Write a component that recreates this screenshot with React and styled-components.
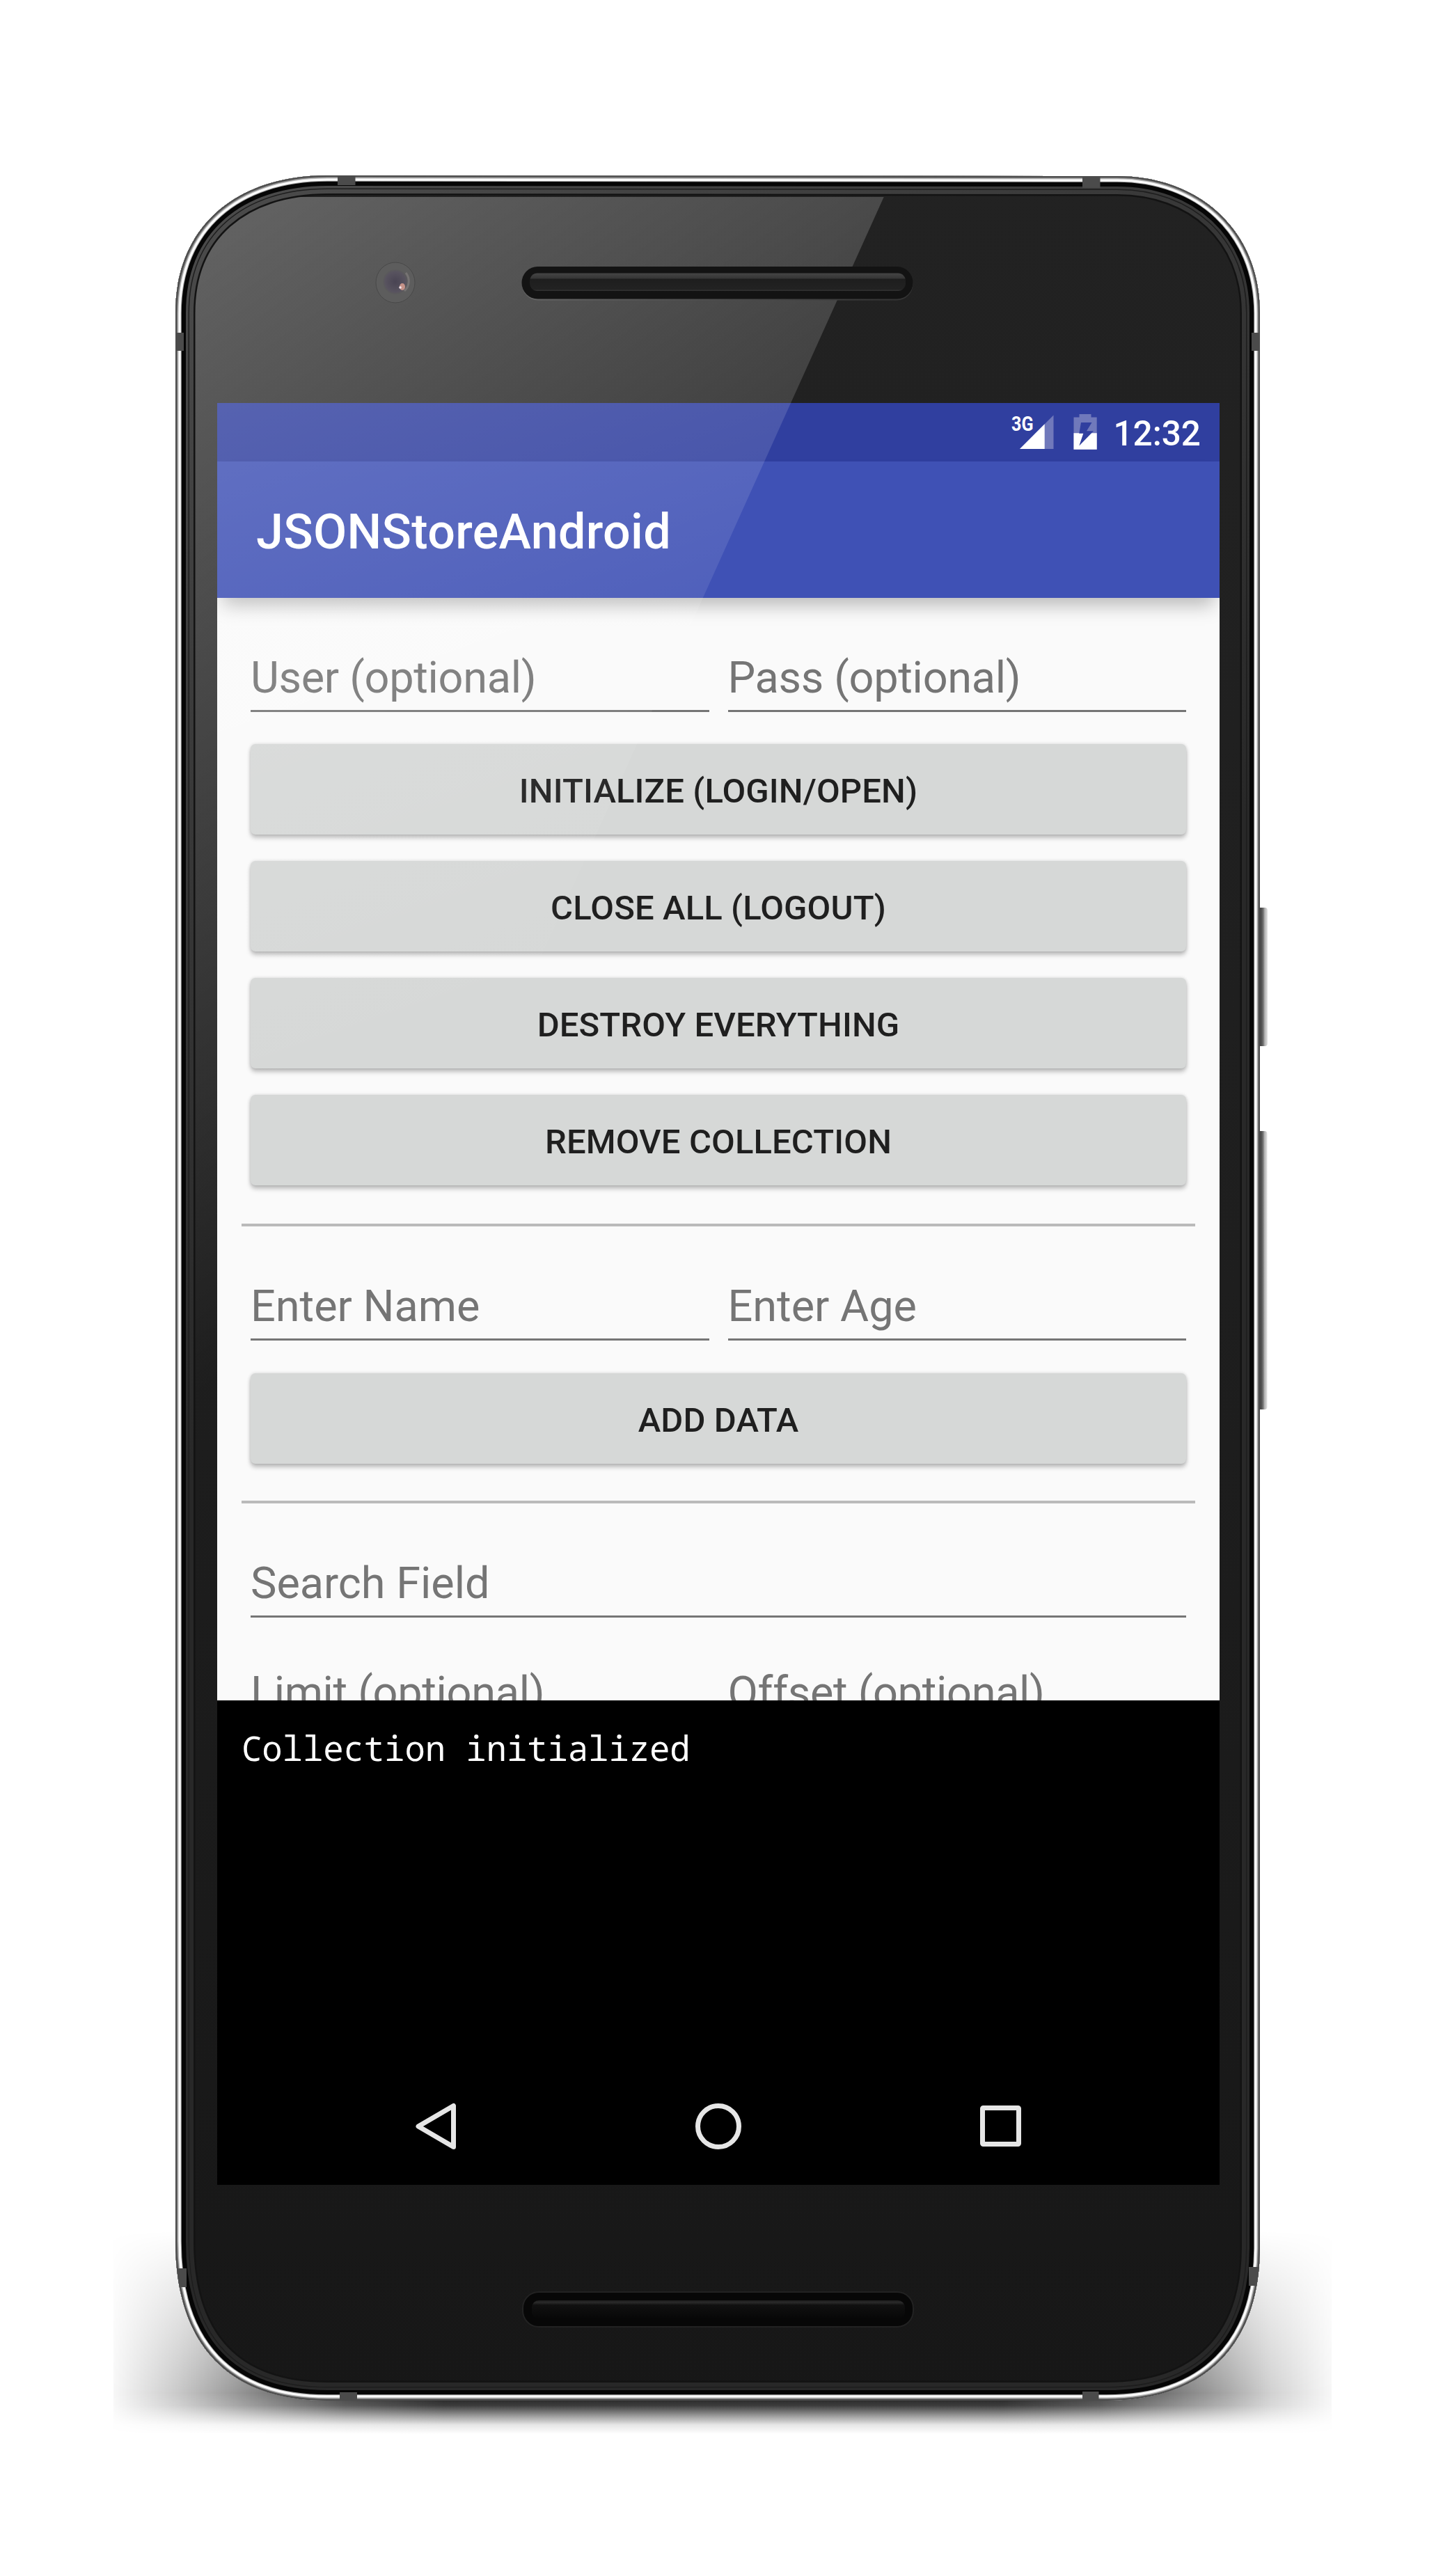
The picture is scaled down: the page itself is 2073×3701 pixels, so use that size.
import React from "react";
import styled, { createGlobalStyle } from "styled-components";

const Global = createGlobalStyle`
  html, body { margin: 0; padding: 0; background: #fff; }
  * { box-sizing: border-box; }
`;

const Page = styled.main`
  position: relative;
  width: 2073px;
  height: 3701px;
  padding: 579px 0 0 312px;
  background: #fff;
  overflow: hidden;
  font-family: Roboto, "Noto Sans", sans-serif;
`;

const PhoneArt = styled.svg`
  position: absolute;
  inset: 0;
  width: 2073px;
  height: 3701px;
`;

const Screen = styled.section`
  position: relative;
  display: flex;
  flex-direction: column;
  width: 1440px;
  height: 2560px;
  background: #000;
  overflow: hidden;
`;

const StatusBar = styled.div`
  display: flex;
  justify-content: flex-end;
  align-items: flex-start;
  flex: none;
  height: 84px;
  padding-right: 27px;
  background: #303f9f;
`;

const StatusIcons = styled.svg`
  width: 128px;
  height: 60px;
  margin: 12px 22px 0 0;
`;

const Clock = styled.span`
  margin-top: 15px;
  color: #fff;
  font-size: 49.5px;
  font-weight: 500;
  line-height: 58px;
`;

const Toolbar = styled.header`
  position: relative;
  z-index: 1;
  display: flex;
  align-items: center;
  flex: none;
  height: 196px;
  padding: 6px 0 0 56px;
  background: #3f51b5;
  box-shadow: 0 18px 26px -8px rgba(0, 0, 0, 0.27);
`;

const Title = styled.h1`
  margin: 0;
  color: #fff;
  font-size: 70px;
  font-weight: 500;
  letter-spacing: 0.35px;
  line-height: 82px;
`;

const Form = styled.div`
  display: flex;
  flex-direction: column;
  flex: none;
  height: 1584px;
  padding: 0 35px;
  background: #fafafa;
  overflow: hidden;
`;

const FieldRow = styled.div`
  display: flex;
  flex: none;
  gap: 27px;
  height: 129px;
  margin: ${(p) => p.$top ?? 35}px 13px 0;
`;

const Field = styled.div`
  display: flex;
  align-items: flex-end;
  flex: 1 1 0;
  padding-bottom: 9px;
  border-bottom: 3px solid #757575;
  color: #757575;
  font-size: 63px;
  letter-spacing: ${(p) => (p.$tight ? "-0.3px" : "0")};
  line-height: 74px;
  white-space: nowrap;
`;

const Buttons = styled.div`
  display: flex;
  flex-direction: column;
  flex: none;
  gap: 38px;
  margin: ${(p) => p.$top ?? 46}px 13px 0;
`;

const RaisedButton = styled.button`
  height: 130px;
  padding: 6px 0 0;
  border: 0;
  border-radius: 7px;
  background: #d6d8d7;
  box-shadow: 0 5px 6px rgba(0, 0, 0, 0.24), 0 0 5px rgba(0, 0, 0, 0.14);
  color: #1f1f1f;
  font: 500 49px/58px Roboto, "Noto Sans", sans-serif;
  letter-spacing: 0.12px;
  text-transform: uppercase;
`;

const Divider = styled.hr`
  flex: none;
  width: 100%;
  height: 4px;
  margin: ${(p) => p.$top ?? 55}px 0 0;
  border: 0;
  background: #bababa;
`;

const Log = styled.pre`
  flex: 1;
  margin: 0;
  padding: 39px 35px;
  color: #fff;
  font: 49px/58px "Droid Sans Mono", "Noto Sans Mono", "DejaVu Sans Mono", monospace;
  letter-spacing: -0.1px;
`;

const NavBar = styled.nav`
  display: flex;
  justify-content: center;
  align-items: center;
  flex: none;
  gap: 310px;
  height: 168px;
`;

const NavIcon = styled.svg`
  width: 96px;
  height: 96px;
  fill: none;
  stroke: #e6e6e6;
  stroke-width: 7;
  stroke-linejoin: round;
`;

const Glare = styled.svg`
  position: absolute;
  inset: 0;
  z-index: 2;
  pointer-events: none;
`;

const OUTLINE =
  "M470 252 L1605 253 C1722 253 1810 330 1810 450 L1810 3230 C1809 3370 1730 3449 1590 3449 L470 3449 C330 3449 252 3370 252 3220 L252 450 C252 325 340 252 470 252 Z";

const RINGS = [
  { width: 57, color: "#131313" },
  { width: 52, color: "url(#lip)" },
  { width: 40, color: "#1d1d1d" },
  { width: 37, color: "url(#lip)" },
  { width: 30, color: "#060606" },
  { width: 17.5, color: "#9d9d9d" },
  { width: 15.5, color: "#fbfbfb" },
  { width: 9, color: "#bdbdbd" },
  { width: 6.5, color: "#7b7b7b" },
  { width: 4, color: "#4c4c4c" },
];

const BANDS = [
  [485, 250, 25.5, 16],
  [1555, 250, 25.5, 20],
  [250, 478, 14, 26],
  [1798, 478, 14, 26],
  [488, 3437, 25, 14],
  [1555, 3436, 23.5, 14],
  [250, 3259, 18, 27],
  [1794, 3257, 18, 27],
];

function Phone() {
  return (
    <PhoneArt viewBox="0 0 2073 3701" aria-hidden="true">
      <defs>
        <clipPath id="outline"><path d={OUTLINE} /></clipPath>
        <linearGradient id="body" x1="0" y1="0" x2="0" y2="1">
          <stop offset="0" stopColor="#222" />
          <stop offset="0.5" stopColor="#1e1e1e" />
          <stop offset="1" stopColor="#171717" />
        </linearGradient>
        <linearGradient id="lip" gradientUnits="userSpaceOnUse" x1="252" y1="251" x2="1100" y2="1600">
          <stop offset="0" stopColor="#4c4c4c" />
          <stop offset="0.5" stopColor="#383838" />
          <stop offset="1" stopColor="#282828" />
        </linearGradient>
        <linearGradient id="shine" gradientUnits="userSpaceOnUse" x1="280" y1="290" x2="1087" y2="1450">
          <stop offset="0" stopColor="#fff" stopOpacity="0.3" />
          <stop offset="1" stopColor="#fff" stopOpacity="0" />
        </linearGradient>
        <linearGradient id="shadowX" gradientUnits="userSpaceOnUse" x1="163" y1="0" x2="1913" y2="0">
          <stop offset="0" stopColor="#000" stopOpacity="0.03" />
          <stop offset="0.05" stopColor="#000" stopOpacity="0.2" />
          <stop offset="0.09" stopColor="#000" stopOpacity="0.36" />
          <stop offset="0.13" stopColor="#000" stopOpacity="0.52" />
          <stop offset="0.19" stopColor="#000" stopOpacity="0.75" />
          <stop offset="0.27" stopColor="#000" stopOpacity="0.9" />
          <stop offset="0.73" stopColor="#000" stopOpacity="0.9" />
          <stop offset="0.81" stopColor="#000" stopOpacity="0.75" />
          <stop offset="0.87" stopColor="#000" stopOpacity="0.52" />
          <stop offset="0.91" stopColor="#000" stopOpacity="0.36" />
          <stop offset="0.95" stopColor="#000" stopOpacity="0.18" />
          <stop offset="1" stopColor="#000" stopOpacity="0.03" />
        </linearGradient>
        <linearGradient id="shadowY" gradientUnits="userSpaceOnUse" x1="0" y1="3205" x2="0" y2="3497">
          <stop offset="0" stopColor="#000" />
          <stop offset="0.25" stopColor="#555" />
          <stop offset="0.6" stopColor="#c0c0c0" />
          <stop offset="0.8" stopColor="#fff" />
          <stop offset="0.86" stopColor="#d8d8d8" />
          <stop offset="0.91" stopColor="#707070" />
          <stop offset="0.955" stopColor="#1c1c1c" />
          <stop offset="1" stopColor="#000" />
        </linearGradient>
        <mask id="shadowMask" maskUnits="userSpaceOnUse" x="163" y="3205" width="1750" height="292">
          <rect x="163" y="3205" width="1750" height="292" fill="url(#shadowY)" />
        </mask>
        <linearGradient id="key" x1="0" y1="0" x2="1" y2="0">
          <stop offset="0" stopColor="#2e2e2e" />
          <stop offset="0.45" stopColor="#555" />
          <stop offset="0.6" stopColor="#777" />
          <stop offset="0.72" stopColor="#b0b0b0" />
          <stop offset="1" stopColor="#e4e4e4" />
        </linearGradient>
        <linearGradient id="slot" x1="0" y1="0" x2="0" y2="1">
          <stop offset="0" stopColor="#454545" />
          <stop offset="0.28" stopColor="#363636" />
          <stop offset="0.34" stopColor="#1e1e1e" />
          <stop offset="0.9" stopColor="#222" />
          <stop offset="1" stopColor="#343434" />
        </linearGradient>
        <linearGradient id="lowSlot" x1="0" y1="0" x2="0" y2="1">
          <stop offset="0" stopColor="#1f1f1f" />
          <stop offset="0.12" stopColor="#292929" />
          <stop offset="0.25" stopColor="#101010" />
          <stop offset="1" stopColor="#070707" />
        </linearGradient>
        <linearGradient id="rim" x1="0" y1="0" x2="1" y2="0">
          <stop offset="0" stopColor="#666" />
          <stop offset="1" stopColor="#333" />
        </linearGradient>
        <radialGradient id="lens">
          <stop offset="0" stopColor="#494453" />
          <stop offset="0.8" stopColor="#58535f" />
          <stop offset="1" stopColor="#5b5b5b" />
        </radialGradient>
      </defs>

      <rect x="163" y="3205" width="1750" height="292" fill="url(#shadowX)" mask="url(#shadowMask)" />
      <rect x="1806" y="1304" width="15" height="199" rx="4" fill="url(#key)" />
      <rect x="1806" y="1625" width="14.5" height="400" rx="4" fill="url(#key)" />

      <g clipPath="url(#outline)">
        <path d={OUTLINE} fill="url(#body)" />
        <path d="M252 283 H1269.7 L252 2537 Z" fill="url(#shine)" />
        {RINGS.map((r) => (
          <path key={r.width} d={OUTLINE} fill="none" stroke={r.color} strokeWidth={r.width} />
        ))}
        {BANDS.map(([x, y, w, h]) => (
          <rect key={`${x}-${y}`} x={x} y={y} width={w} height={h} fill="#4b4b4b" />
        ))}
      </g>

      <ellipse cx="568" cy="406" rx="28" ry="29" fill="#5d5d5d" stroke="#494949" strokeWidth="1" />
      <circle cx="568" cy="405" r="18" fill="url(#lens)" />
      <path d="M583 392 a19 19 0 0 1 -2 26" fill="none" stroke="#817d7d" strokeWidth="3" opacity="0.7" />
      <ellipse cx="578" cy="412" rx="4" ry="5" fill="#c59288" />
      <circle cx="575" cy="413" r="1.8" fill="#f3e4ea" />

      <rect x="750" y="385" width="561.5" height="46.5" rx="23" fill="url(#rim)" />
      <rect x="749.5" y="383" width="562" height="46.5" rx="23" fill="#131313" />
      <rect x="761" y="392.5" width="540" height="25.5" rx="11" fill="url(#slot)" />
      <rect x="751" y="3293" width="561" height="50" rx="23" fill="#070707" stroke="#222" strokeWidth="2" />
      <rect x="764" y="3305" width="536" height="27" rx="10" fill="url(#lowSlot)" />
    </PhoneArt>
  );
}

function SystemIcons() {
  return (
    <StatusIcons viewBox="1448 591 128 60">
      <path d="M1464 645 L1512.5 596.5 V645 Z" fill="#7079bb" />
      <path d="M1464 645 L1499.7 609.3 V645 Z" fill="#fff" />
      <text x="1452" y="618.5" fill="#fff" fontFamily="Roboto, sans-serif" fontSize="30" fontWeight="700" textLength="31.5" lengthAdjust="spacingAndGlyphs">3G</text>
      <path d="M1541.5 599.5 H1549.5 V595 H1566.5 V599.5 H1574.7 V645.7 H1541.5 Z" fill="#7079bb" />
      <path d="M1541.5 622.3 H1574.7 V645.7 H1541.5 Z" fill="#fff" />
      <path d="M1552 607 H1567.5 L1560 619.2 H1570 L1549.3 640.5 L1555.3 622.8 H1549.3 Z" fill="#303f9f" />
    </StatusIcons>
  );
}

export default function App() {
  return (
    <Page>
      <Global />
      <Phone />
      <Screen>
        <StatusBar>
          <SystemIcons />
          <Clock>12:32</Clock>
        </StatusBar>
        <Toolbar>
          <Title>JSONStoreAndroid</Title>
        </Toolbar>
        <Form>
          <FieldRow>
            <Field $tight>User (optional)</Field>
            <Field $tight>Pass (optional)</Field>
          </FieldRow>
          <Buttons>
            <RaisedButton>Initialize (Login/Open)</RaisedButton>
            <RaisedButton>Close All (Logout)</RaisedButton>
            <RaisedButton>Destroy Everything</RaisedButton>
            <RaisedButton>Remove Collection</RaisedButton>
          </Buttons>
          <Divider />
          <FieldRow>
            <Field>Enter Name</Field>
            <Field>Enter Age</Field>
          </FieldRow>
          <Buttons $top={47}>
            <RaisedButton>Add Data</RaisedButton>
          </Buttons>
          <Divider $top={53} />
          <FieldRow>
            <Field>Search Field</Field>
          </FieldRow>
          <FieldRow $top={28}>
            <Field $tight>Limit (optional)</Field>
            <Field $tight>Offset (optional)</Field>
          </FieldRow>
        </Form>
        <Log>Collection initialized</Log>
        <NavBar>
          <NavIcon viewBox="0 0 96 96"><path d="M73.5 18.5 V77.5 L23 48 Z" /></NavIcon>
          <NavIcon viewBox="0 0 96 96"><circle cx="48" cy="48" r="29.5" /></NavIcon>
          <NavIcon viewBox="0 0 96 96"><rect x="21.5" y="21.5" width="52" height="52" rx="1" /></NavIcon>
        </NavBar>
        <Glare width="1440" height="1864" viewBox="0 0 1440 1864">
          <defs>
            <linearGradient id="glass" gradientUnits="userSpaceOnUse" x1="0" y1="0" x2="320" y2="920">
              <stop offset="0" stopColor="#fff" stopOpacity="0.185" />
              <stop offset="1" stopColor="#fff" stopOpacity="0" />
            </linearGradient>
          </defs>
          <path d="M0 0 H824 L0 1828 Z" fill="url(#glass)" />
        </Glare>
      </Screen>
    </Page>
  );
}
